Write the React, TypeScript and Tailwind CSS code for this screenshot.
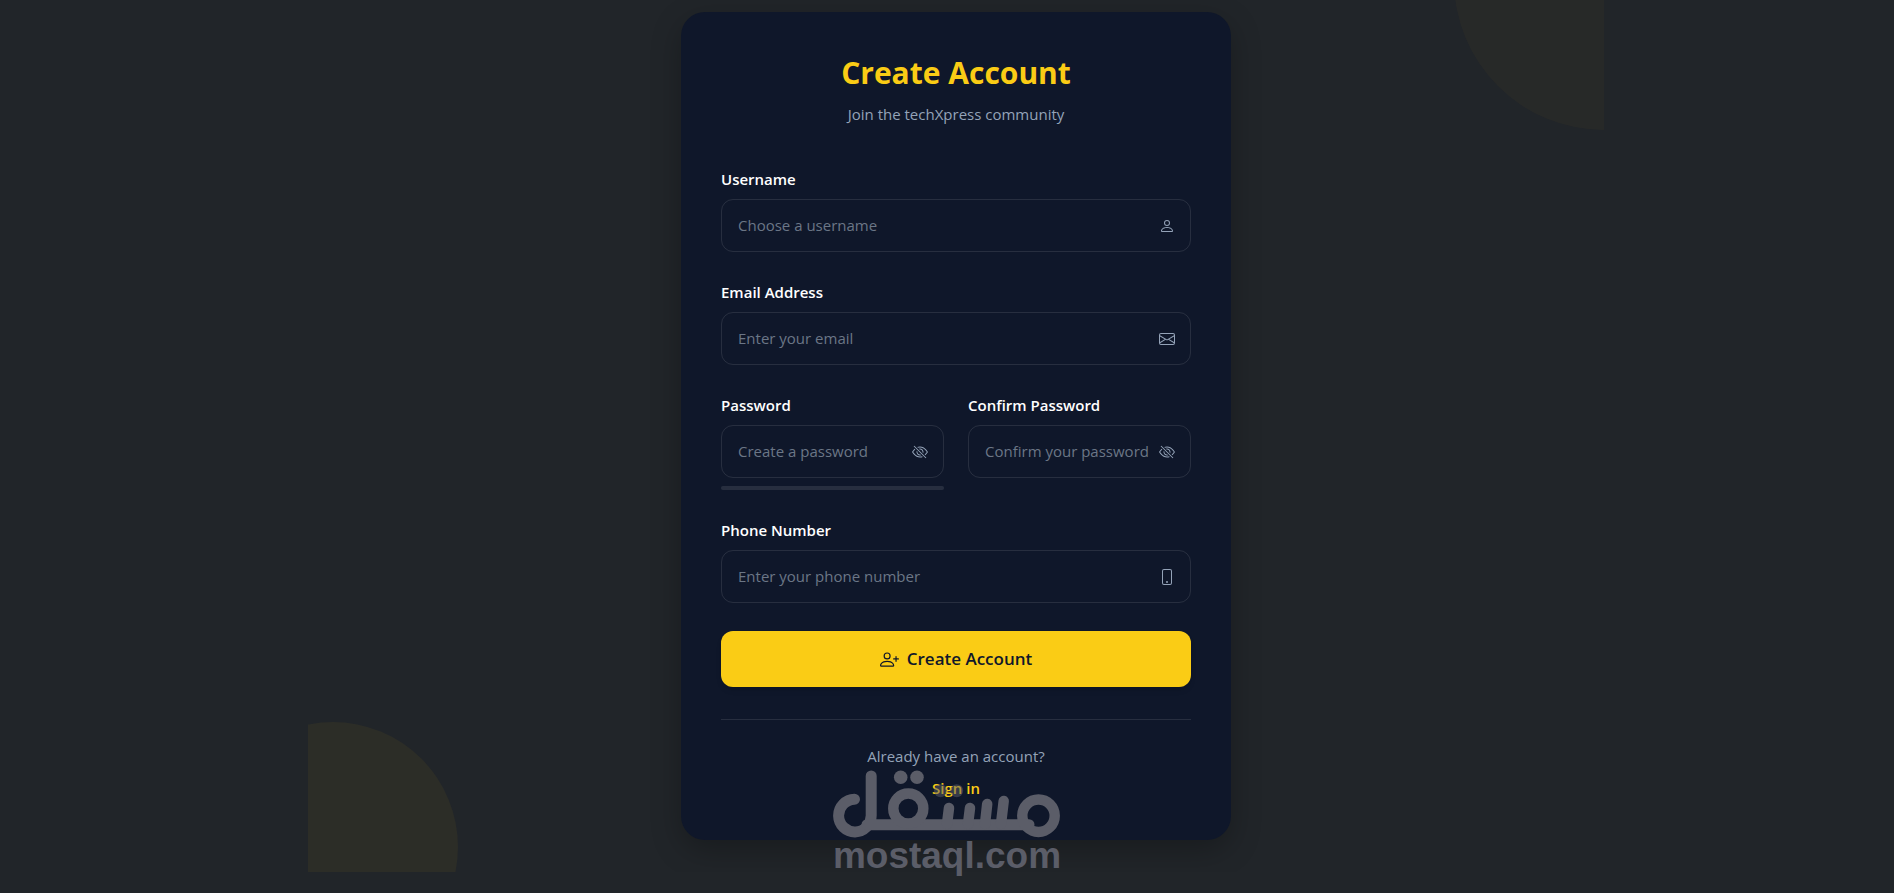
import React, { useState } from 'react';
import {
  BsPerson,
  BsEnvelope,
  BsEyeSlash,
  BsEye,
  BsPhone,
  BsPersonPlus,
} from 'react-icons/bs';

interface FieldProps {
  id: string;
  label: string;
  type: string;
  placeholder: string;
  icon: React.ReactNode;
}

const inputClasses =
  'block h-[53px] w-full rounded-xl border border-white/10 bg-transparent pb-0.5 pl-4 pr-10 text-[15px] text-white placeholder:text-[#6b7686] focus:border-[#facc15] focus:outline-none';

const labelClasses = 'mb-2 block text-[15px] leading-6 font-semibold text-white';

const Field: React.FC<FieldProps> = ({ id, label, type, placeholder, icon }) => (
  <div>
    <label htmlFor={id} className={labelClasses}>
      {label}
    </label>
    <div className="relative">
      <input id={id} name={id} type={type} placeholder={placeholder} className={inputClasses} />
      <span className="pointer-events-none absolute inset-y-0 right-4 flex items-center text-[#94a3b8]">
        {icon}
      </span>
    </div>
  </div>
);

interface PasswordFieldProps {
  id: string;
  label: string;
  placeholder: string;
  children?: React.ReactNode;
}

const PasswordField: React.FC<PasswordFieldProps> = ({ id, label, placeholder, children }) => {
  const [visible, setVisible] = useState(false);

  return (
    <div>
      <label htmlFor={id} className={labelClasses}>
        {label}
      </label>
      <div className="relative">
        <input
          id={id}
          name={id}
          type={visible ? 'text' : 'password'}
          placeholder={placeholder}
          className={inputClasses}
        />
        <button
          type="button"
          aria-label={visible ? 'Hide password' : 'Show password'}
          onClick={() => setVisible(!visible)}
          className="absolute inset-y-0 right-4 flex cursor-pointer items-center text-[#94a3b8]"
        >
          {visible ? <BsEye size={16} /> : <BsEyeSlash size={16} />}
        </button>
      </div>
      {children}
    </div>
  );
};

const Watermark: React.FC = () => (
  <div className="pointer-events-none absolute inset-x-0 top-[770px] flex flex-col items-center text-[#5b5d68]">
    <svg width="228" height="68" viewBox="0 0 228 68" fill="none" aria-hidden="true">
      <g stroke="currentColor" strokeWidth="10.5" strokeLinecap="round">
        <path d="M21.5 29.3 A16.3 16.3 0 1 0 38.2 45.5 V6" strokeWidth="11" />
        <path d="M34 54.7 H196" strokeWidth="11" />
        <circle cx="75.3" cy="38.5" r="15" />
        <path d="M114 54 L116 38" />
        <path d="M135 54 L137 38" />
        <path d="M152 54 L154.2 34" />
        <path d="M168 54 L170.7 31" />
        <circle cx="205.5" cy="45.7" r="16.2" />
      </g>
      <g fill="currentColor">
        <circle cx="67.7" cy="7.3" r="6.8" />
        <circle cx="84" cy="7.3" r="6.8" />
        <circle cx="107.5" cy="20.7" r="6.5" opacity="0.5" />
        <circle cx="123.7" cy="20.7" r="6.5" opacity="0.5" />
      </g>
    </svg>
    <span className="font-['Liberation_Sans',sans-serif] text-[37px] leading-9 font-bold">
      mostaql.com
    </span>
  </div>
);

const App: React.FC = () => {
  const handleSubmit = (e: React.FormEvent) => {
    e.preventDefault();
  };

  return (
    <div className="relative min-h-screen bg-[#212529] pl-[18px] font-['Open_Sans','Noto_Sans',sans-serif]">
      <main className="relative mx-auto max-w-[1296px] overflow-hidden pt-3 pb-8">
        {/* Background circles */}
        <div className="absolute -top-[170px] -right-[150px] size-[300px] rounded-full bg-[#facc15]/3" />
        <div className="absolute -bottom-[100px] -left-[100px] size-[250px] rounded-full bg-[#facc15]/5" />

        {/* Card */}
        <div className="relative mx-auto max-w-[550px] rounded-3xl bg-[#0f172a] p-10 shadow-[0_10px_30px_rgba(0,0,0,0.25)]">
          <div className="mb-[41px] text-center">
            <h1 className="text-[30px] leading-[42px] font-bold text-[#facc15]">Create Account</h1>
            <p className="mt-2 text-[15px] leading-6 text-[#94a3b8]">Join the techXpress community</p>
          </div>

          <form onSubmit={handleSubmit} className="flex flex-col gap-7">
            <Field
              id="username"
              label="Username"
              type="text"
              placeholder="Choose a username"
              icon={<BsPerson size={16} />}
            />
            <Field
              id="email"
              label="Email Address"
              type="email"
              placeholder="Enter your email"
              icon={<BsEnvelope size={16} />}
            />
            <div className="grid grid-cols-2 gap-6">
              <PasswordField id="password" label="Password" placeholder="Create a password">
                <div className="mt-2 h-1 rounded-sm bg-white/10" />
              </PasswordField>
              <PasswordField
                id="confirmPassword"
                label="Confirm Password"
                placeholder="Confirm your password"
              />
            </div>
            <Field
              id="phone"
              label="Phone Number"
              type="tel"
              placeholder="Enter your phone number"
              icon={<BsPhone size={16} />}
            />
            <button
              type="submit"
              className="flex h-14 w-full cursor-pointer items-center justify-center gap-2 rounded-xl bg-[#facc15] text-[17px] font-semibold text-[#0f172a] shadow-md"
            >
              <BsPersonPlus size={19} />
              Create Account
            </button>
          </form>

          <div className="mt-8 border-t border-white/10 pt-6 text-center text-[15px] leading-6">
            <p className="text-[#94a3b8]">Already have an account?</p>
            <a href="#signin" className="mt-2 inline-block font-semibold text-[#facc15]">
              Sign in
            </a>
          </div>
        </div>
      </main>
      <Watermark />
    </div>
  );
};

export default App;
